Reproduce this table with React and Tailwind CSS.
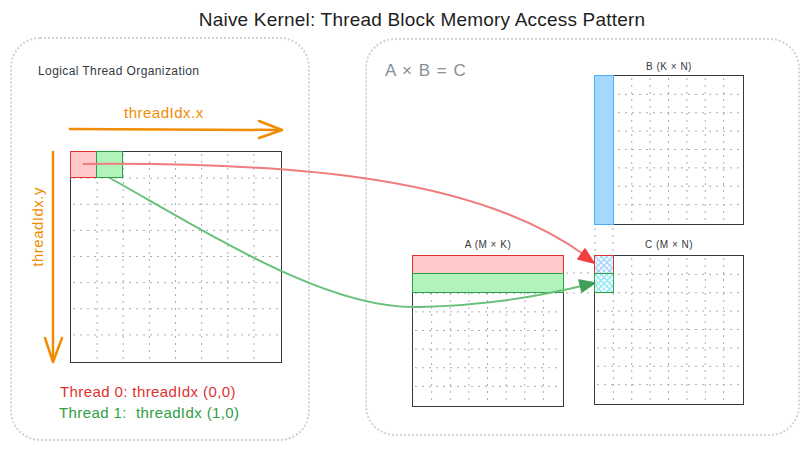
import React from 'react';

const FONT = { fontFamily: '"Liberation Sans", "DejaVu Sans", sans-serif' };

// dotted grid lines inside a matrix box
function GridLines({ size, n }) {
  const step = size / n;
  const lines = [];
  for (let i = 1; i < n; i++) {
    lines.push(<line key={'v' + i} x1={i * step} y1="2" x2={i * step} y2={size - 2} />);
    lines.push(<line key={'h' + i} x1="2" y1={i * step} x2={size - 2} y2={i * step} />);
  }
  return (
    <svg className="absolute inset-0" width={size} height={size}>
      <g stroke="#a5adb5" strokeWidth="1" strokeDasharray="2 5" fill="none">
        {lines}
      </g>
    </svg>
  );
}

function Matrix({ size, n, children }) {
  return (
    <div className="relative shrink-0 bg-white border-[1.5px] border-[#343a40]" style={{ width: size, height: size }}>
      <GridLines size={size - 3} n={n} />
      {children}
    </div>
  );
}

function LabeledMatrix({ label, labelClass, size, n, children }) {
  return (
    <div className="flex flex-col items-center">
      <div className={`text-[10px] tracking-[0.5px] text-[#343a40] ${labelClass}`}>{label}</div>
      <Matrix size={size} n={n}>
        {children}
      </Matrix>
    </div>
  );
}

const hatchBlue =
  'bg-[repeating-linear-gradient(45deg,#a5d8ff_0_1px,transparent_1px_4px),repeating-linear-gradient(-45deg,#a5d8ff_0_1px,transparent_1px_4px)]';
const hatchCyan =
  'bg-[repeating-linear-gradient(45deg,#99e9f2_0_1px,transparent_1px_4px),repeating-linear-gradient(-45deg,#99e9f2_0_1px,transparent_1px_4px)]';

export default function App() {
  return (
    <div className="relative w-[809px] h-[451px] bg-white overflow-hidden text-[#1e1e1e] flex flex-col pt-[8px]" style={FONT}>
      {/* Title */}
      <div className="pl-[35px] text-center text-[19px] leading-6 tracking-[0.2px]">
        Naive Kernel: Thread Block Memory Access Pattern
      </div>

      <div className="flex items-start gap-[55px] pl-[10px] mt-[5px]">
        {/* Left panel */}
        <div className="w-[300px] h-[404px] rounded-[30px] border-2 border-dotted border-[#ced4da] flex flex-col pl-[16px]">
          <div className="ml-[10px] mt-[24px] text-[12px] leading-4 tracking-[0.4px] text-[#343a40]">
            Logical Thread Organization
          </div>
          <div className="ml-[96px] mt-[24px] text-[15px] leading-5 tracking-[0.5px] text-[#f08c00]">
            threadIdx.x
          </div>
          <div className="flex items-start mt-[28px]">
            <div className="w-[20px] mt-[36px] text-[15px] leading-5 tracking-[0.5px] text-[#f08c00] [writing-mode:vertical-rl] rotate-180">
              threadIdx.y
            </div>
            <div className="w-[22px]" />
            <Matrix size={212} n={8}>
              <div className="absolute left-[-1.5px] top-[-1.5px] w-[27px] h-[27px] bg-[#ffc9c9] border-[1.5px] border-[#e03131]" />
              <div className="absolute left-[25px] top-[-1.5px] w-[27px] h-[27px] bg-[#b2f2bb] border-[1.5px] border-[#2f9e44]" />
            </Matrix>
          </div>
          <div className="ml-[32px] mt-[19px] text-[15px] leading-5 tracking-[0.4px] text-[#e03131] whitespace-pre">
            Thread 0: threadIdx (0,0)
          </div>
          <div className="ml-[31px] mt-[1px] text-[15px] leading-5 tracking-[0.4px] text-[#2f9e44] whitespace-pre">
            Thread 1:  threadIdx (1,0)
          </div>
        </div>

        {/* Right panel */}
        <div className="w-[435px] h-[398px] mt-[1px] rounded-[30px] border-2 border-dotted border-[#ced4da] flex flex-col">
          <div className="flex justify-between items-start pl-[18px] pr-[54px] pt-[19px]">
            <div className="text-[17px] leading-6 tracking-[1px] text-[#868e96]">A × B = C</div>
            <LabeledMatrix label="B (K × N)" labelClass="h-[16px] leading-4" size={150} n={8}>
              <div className="absolute left-[-1.5px] top-[-1.5px] w-[20px] h-[150px] bg-[#a5d8ff] border-[1.5px] border-[#4dabf7]" />
            </LabeledMatrix>
          </div>
          <div className="flex items-start gap-[30px] pl-[45px] mt-[12px]">
            <LabeledMatrix label="A (M × K)" labelClass="h-[18px] leading-4" size={152} n={8}>
              <div className="absolute left-[-1.5px] top-[-1.5px] w-[152px] h-[20px] bg-[#ffc9c9] border-[1.5px] border-[#e03131]" />
              <div className="absolute left-[-1.5px] top-[17px] w-[152px] h-[20px] bg-[#b2f2bb] border-[1.5px] border-[#2f9e44]" />
            </LabeledMatrix>
            <LabeledMatrix label="C (M × N)" labelClass="h-[18px] leading-4" size={150} n={8}>
              <div className={`absolute left-[-1.5px] top-[-1.5px] w-[20px] h-[20px] bg-[#f1f8ff] border-[1.5px] border-[#e03131] ${hatchBlue}`} />
              <div className={`absolute left-[-1.5px] top-[17px] w-[20px] h-[20px] bg-[#eefbfc] border-[1.5px] border-[#2f9e44] ${hatchCyan}`} />
            </LabeledMatrix>
          </div>
        </div>
      </div>

      {/* Arrows and connector lines drawn over the diagram */}
      <svg className="absolute inset-0 pointer-events-none" width="809" height="451">
        <g stroke="#a5adb5" strokeWidth="1" strokeDasharray="2 5" fill="none">
          <line x1="566" y1="273" x2="593" y2="273" />
          <line x1="566" y1="293" x2="593" y2="293" />
          <line x1="595" y1="228" x2="595" y2="254" />
          <line x1="613" y1="228" x2="613" y2="254" />
        </g>
        <g stroke="#f08c00" strokeWidth="2.5" fill="none" strokeLinecap="round" strokeLinejoin="round">
          <path d="M 70 129 L 281 130" />
          <path d="M 259 121 L 282 130 L 259 138" />
          <path d="M 53 152 L 53 361" />
          <path d="M 45 338 L 53 362 L 62 338" />
        </g>
        <path d="M 83 164 C 300 162, 480 178, 586 256" stroke="#ef7d7d" strokeWidth="2" fill="none" />
        <polygon points="594,263 578,259 585,249" fill="#f03e3e" stroke="#f03e3e" strokeWidth="1.5" strokeLinejoin="round" />
        <path d="M 110 178 C 220 240, 330 310, 420 307 C 490 305, 540 296, 586 285" stroke="#69c07a" strokeWidth="2" fill="none" />
        <polygon points="595,283 582,292 579,280" fill="#40a057" stroke="#40a057" strokeWidth="1.5" strokeLinejoin="round" />
      </svg>
    </div>
  );
}
